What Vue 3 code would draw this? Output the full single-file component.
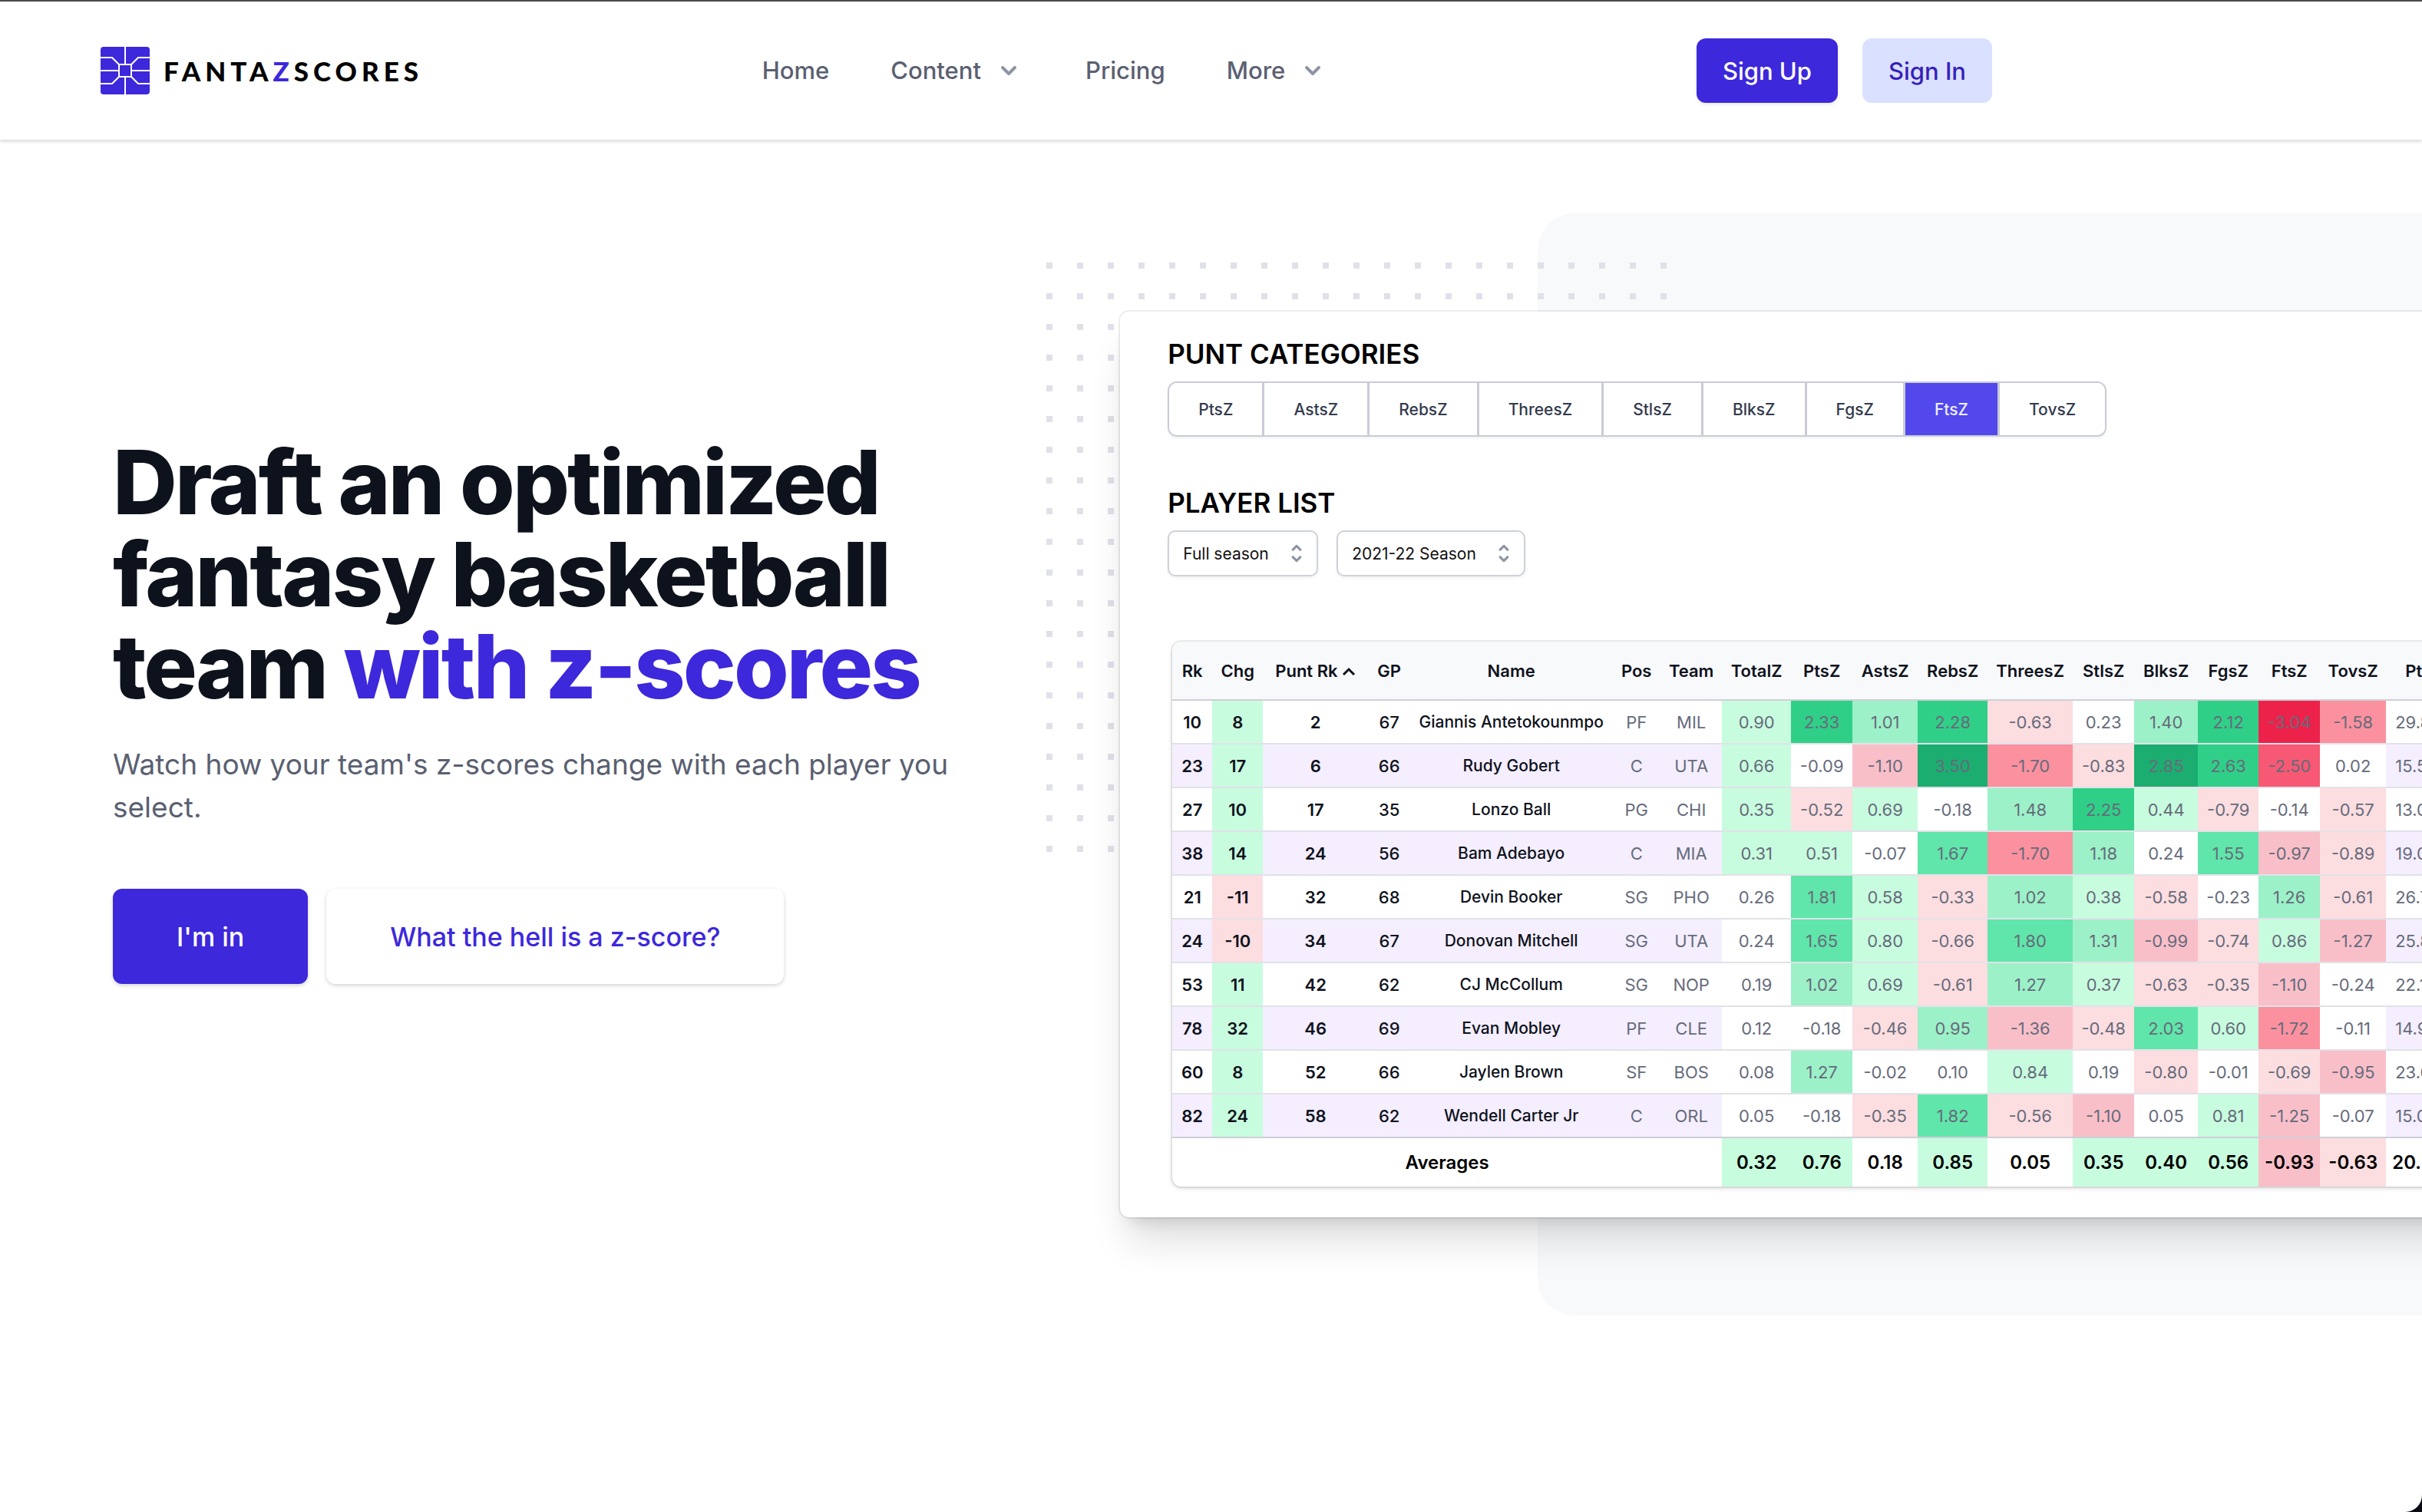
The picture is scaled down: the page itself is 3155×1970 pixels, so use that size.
<script setup>
import { ref } from 'vue'

const categories = ['PtsZ', 'AstsZ', 'RebsZ', 'ThreesZ', 'StlsZ', 'BlksZ', 'FgsZ', 'FtsZ', 'TovsZ']
const punted = ref('FtsZ')
const span = ref('Full season')
const season = ref('2021-22 Season')

const columns = [
  { key: 'Rk', width: 52 },
  { key: 'Chg', width: 66 },
  { key: 'Punt Rk', width: 137, sorted: true },
  { key: 'GP', width: 55 },
  { key: 'Name', width: 263 },
  { key: 'Pos', width: 63 },
  { key: 'Team', width: 80 },
  { key: 'TotalZ', width: 90 },
  { key: 'PtsZ', width: 80 },
  { key: 'AstsZ', width: 85 },
  { key: 'RebsZ', width: 91 },
  { key: 'ThreesZ', width: 111 },
  { key: 'StlsZ', width: 80 },
  { key: 'BlksZ', width: 83 },
  { key: 'FgsZ', width: 79 },
  { key: 'FtsZ', width: 80 },
  { key: 'TovsZ', width: 86 },
  { key: 'Pts', width: 84 },
]

const players = [
  { rk: 10, chg: 8, punt: 2, gp: 67, name: 'Giannis Antetokounmpo', pos: 'PF', team: 'MIL', z: ['0.90', '2.33', '1.01', '2.28', '-0.63', '0.23', '1.40', '2.12', '-3.04', '-1.58'], pts: '29.8' },
  { rk: 23, chg: 17, punt: 6, gp: 66, name: 'Rudy Gobert', pos: 'C', team: 'UTA', z: ['0.66', '-0.09', '-1.10', '3.50', '-1.70', '-0.83', '2.85', '2.63', '-2.50', '0.02'], pts: '15.5' },
  { rk: 27, chg: 10, punt: 17, gp: 35, name: 'Lonzo Ball', pos: 'PG', team: 'CHI', z: ['0.35', '-0.52', '0.69', '-0.18', '1.48', '2.25', '0.44', '-0.79', '-0.14', '-0.57'], pts: '13.0' },
  { rk: 38, chg: 14, punt: 24, gp: 56, name: 'Bam Adebayo', pos: 'C', team: 'MIA', z: ['0.31', '0.51', '-0.07', '1.67', '-1.70', '1.18', '0.24', '1.55', '-0.97', '-0.89'], pts: '19.0' },
  { rk: 21, chg: -11, punt: 32, gp: 68, name: 'Devin Booker', pos: 'SG', team: 'PHO', z: ['0.26', '1.81', '0.58', '-0.33', '1.02', '0.38', '-0.58', '-0.23', '1.26', '-0.61'], pts: '26.7' },
  { rk: 24, chg: -10, punt: 34, gp: 67, name: 'Donovan Mitchell', pos: 'SG', team: 'UTA', z: ['0.24', '1.65', '0.80', '-0.66', '1.80', '1.31', '-0.99', '-0.74', '0.86', '-1.27'], pts: '25.8' },
  { rk: 53, chg: 11, punt: 42, gp: 62, name: 'CJ McCollum', pos: 'SG', team: 'NOP', z: ['0.19', '1.02', '0.69', '-0.61', '1.27', '0.37', '-0.63', '-0.35', '-1.10', '-0.24'], pts: '22.1' },
  { rk: 78, chg: 32, punt: 46, gp: 69, name: 'Evan Mobley', pos: 'PF', team: 'CLE', z: ['0.12', '-0.18', '-0.46', '0.95', '-1.36', '-0.48', '2.03', '0.60', '-1.72', '-0.11'], pts: '14.9' },
  { rk: 60, chg: 8, punt: 52, gp: 66, name: 'Jaylen Brown', pos: 'SF', team: 'BOS', z: ['0.08', '1.27', '-0.02', '0.10', '0.84', '0.19', '-0.80', '-0.01', '-0.69', '-0.95'], pts: '23.6' },
  { rk: 82, chg: 24, punt: 58, gp: 62, name: 'Wendell Carter Jr', pos: 'C', team: 'ORL', z: ['0.05', '-0.18', '-0.35', '1.82', '-0.56', '-1.10', '0.05', '0.81', '-1.25', '-0.07'], pts: '15.0' },
]

const averages = ['0.32', '0.76', '0.18', '0.85', '0.05', '0.35', '0.40', '0.56', '-0.93', '-0.63']

const steps = [0.3, 0.92, 1.5, 2.1, 2.7]

// Shade of a z-score: up1..up5 for good values, down1..down5 for bad ones
function shade(value) {
  const n = Number(value)
  const level = steps.filter((s) => Math.abs(n) >= s).length
  return level === 0 ? 'even' : (n > 0 ? 'up' : 'down') + level
}
</script>

<template>
  <div class="page">
    <header class="topbar">
      <div class="topbar-inner">
        <div class="side">
          <a class="brand" href="#">
            <svg class="mark" viewBox="0 0 64 62" aria-hidden="true">
              <rect width="64" height="62" rx="4" fill="#3d28db" />
              <g fill="none" stroke="#fff" stroke-width="2">
                <path d="M32 0V23M32 39V62M0 31H24M40 31H64" />
                <path d="M0 14H15L24 23M64 14H49L40 23M0 48H15L24 39M64 48H49L40 39" />
                <rect x="24" y="23" width="16" height="16" />
              </g>
            </svg>
            <span class="wordmark">FANTA<span class="violet">Z</span>SCORES</span>
          </a>
        </div>
        <nav class="menu">
          <a href="#">Home</a>
          <button type="button">
            Content
            <svg viewBox="0 0 20 20" aria-hidden="true"><path d="M6 8l4 4 4-4" /></svg>
          </button>
          <a href="#">Pricing</a>
          <button type="button">
            More
            <svg viewBox="0 0 20 20" aria-hidden="true"><path d="M6 8l4 4 4-4" /></svg>
          </button>
        </nav>
        <div class="side account">
          <button type="button" class="btn solid">Sign Up</button>
          <button type="button" class="btn pale">Sign In</button>
        </div>
      </div>
    </header>

    <main class="hero">
      <section class="copy">
        <h1>Draft an optimized fantasy basketball team <span class="violet">with z-scores</span></h1>
        <p>Watch how your team's z-scores change with each player you select.</p>
        <div class="cta">
          <button type="button" class="big solid">I'm in</button>
          <button type="button" class="big plain">What the hell is a z-score?</button>
        </div>
      </section>

      <section class="stage">
        <div class="slab"></div>
        <svg class="dots" width="808" height="784" aria-hidden="true">
          <defs>
            <pattern id="dot-grid" width="40" height="40" patternUnits="userSpaceOnUse">
              <rect width="8" height="8" fill="#e0e1e8" />
            </pattern>
          </defs>
          <rect width="808" height="784" fill="url(#dot-grid)" />
        </svg>

        <div class="card">
          <h2>PUNT CATEGORIES</h2>
          <div class="group">
            <button
              v-for="c in categories"
              :key="c"
              type="button"
              :class="{ on: c === punted }"
              @click="punted = c"
            >{{ c }}</button>
          </div>

          <h2 class="second">PLAYER LIST</h2>
          <div class="filters">
            <div class="picker">
              <select v-model="span" aria-label="Span">
                <option>Full season</option>
              </select>
              <svg viewBox="0 0 20 20" aria-hidden="true"><path d="M7 7l3-3 3 3M7 13l3 3 3-3" /></svg>
            </div>
            <div class="picker">
              <select v-model="season" aria-label="Season">
                <option>2021-22 Season</option>
              </select>
              <svg viewBox="0 0 20 20" aria-hidden="true"><path d="M7 7l3-3 3 3M7 13l3 3 3-3" /></svg>
            </div>
          </div>

          <div class="sheet">
            <table>
              <colgroup>
                <col v-for="c in columns" :key="c.key" :style="{ width: c.width + 'px' }" />
              </colgroup>
              <thead>
                <tr>
                  <th v-for="c in columns" :key="c.key" scope="col">
                    {{ c.key }}
                    <svg v-if="c.sorted" viewBox="0 0 18 12" aria-hidden="true"><path d="M2 10l7-7 7 7" /></svg>
                  </th>
                </tr>
              </thead>
              <tbody>
                <tr v-for="p in players" :key="p.name">
                  <td class="strong">{{ p.rk }}</td>
                  <td class="strong" :class="p.chg > 0 ? 'up1' : 'down1'">{{ p.chg }}</td>
                  <td class="strong">{{ p.punt }}</td>
                  <td class="medium">{{ p.gp }}</td>
                  <td class="medium name">{{ p.name }}</td>
                  <td>{{ p.pos }}</td>
                  <td>{{ p.team }}</td>
                  <td v-for="(z, i) in p.z" :key="i" :class="shade(z)">{{ z }}</td>
                  <td class="points">{{ p.pts }}</td>
                </tr>
              </tbody>
              <tfoot>
                <tr>
                  <th colspan="7" scope="row">Averages</th>
                  <td v-for="(z, i) in averages" :key="i" :class="shade(z)">{{ z }}</td>
                  <td class="points">20.5</td>
                </tr>
              </tfoot>
            </table>
          </div>
        </div>
      </section>
    </main>
  </div>
</template>

<style>
html {
  background: #0a0a14;
}
body {
  margin: 0;
}
</style>

<style scoped>
.page {
  box-sizing: border-box;
  min-height: 100vh;
  overflow: hidden;
  border-top: 2px solid #4b4949;
  border-bottom-right-radius: 22px;
  background: #fff;
  color: #0e121c;
  font-family: Inter, 'Liberation Sans', sans-serif;
}
button,
select {
  font: inherit;
  cursor: pointer;
}
.violet {
  color: #3d28db;
}

.topbar {
  position: relative;
  background: #fff;
  box-shadow: 0 2px 6px rgba(0, 0, 0, 0.1), 0 2px 4px rgba(0, 0, 0, 0.08);
}
.topbar-inner {
  display: flex;
  align-items: center;
  box-sizing: border-box;
  max-width: 2595px;
  height: 180px;
  padding-left: 128px;
}
.side {
  display: flex;
  flex: 1;
}
.brand {
  display: flex;
  align-items: center;
  gap: 18px;
  padding-left: 3px;
  color: #000;
  text-decoration: none;
}
.mark {
  width: 64px;
  height: 62px;
}
.wordmark {
  font: 900 35px/40px Lato, sans-serif;
  letter-spacing: 6px;
}
.menu {
  display: flex;
  gap: 80px;
  font-size: 31px;
  font-weight: 500;
  line-height: 48px;
}
.menu a,
.menu button {
  display: flex;
  align-items: center;
  gap: 16px;
  padding: 0;
  border: 0;
  background: none;
  color: #5a6071;
  text-decoration: none;
}
.menu svg {
  width: 40px;
  height: 40px;
  fill: none;
  stroke: #8f94a5;
  stroke-width: 2;
  stroke-linecap: round;
  stroke-linejoin: round;
}
.account {
  justify-content: flex-end;
  gap: 32px;
}
.btn {
  height: 84px;
  padding: 0 34px;
  border: 0;
  border-radius: 12px;
  font-size: 31px;
  font-weight: 500;
}
.solid {
  background: #3d28db;
  color: #fff;
  box-shadow: 0 2px 4px rgba(0, 0, 0, 0.1);
}
.pale {
  background: #dae0ff;
  color: #361fb9;
}

.hero {
  display: grid;
  grid-template-columns: 37fr 43fr;
  padding-top: 96px;
}
.copy {
  padding: 290px 208px 0 147px;
}
h1 {
  margin: 0;
  font-size: 116px;
  font-weight: 800;
  line-height: 120px;
  letter-spacing: -0.025em;
}
.copy p {
  margin: 40px 0 78px;
  color: #5a6071;
  font-size: 37px;
  line-height: 56px;
}
.cta {
  display: flex;
  gap: 24px;
}
.big {
  height: 124px;
  padding: 0 83px;
  border: 0;
  border-radius: 12px;
  font-size: 34px;
  font-weight: 500;
  white-space: nowrap;
  box-shadow: 0 2px 6px rgba(0, 0, 0, 0.1), 0 2px 4px rgba(0, 0, 0, 0.08);
}
.plain {
  background: #fff;
  color: #3d28db;
}

.stage {
  position: relative;
  min-width: 0;
  padding: 128px 0;
}
.slab {
  position: absolute;
  top: 0;
  bottom: 0;
  left: 544px;
  right: 0;
  border-radius: 48px 0 0 48px;
  background: #f8f9fb;
}
.dots {
  position: absolute;
  top: 64px;
  left: -96px;
}
.card {
  position: relative;
  box-sizing: border-box;
  width: max-content;
  padding: 33px 62px 40px;
  border-radius: 12px;
  background: #fff;
  box-shadow: 0 0 0 2px rgba(0, 0, 0, 0.07), 0 40px 50px -10px rgba(0, 0, 0, 0.13),
    0 16px 20px -12px rgba(0, 0, 0, 0.13);
}
h2 {
  margin: 0 0 14px;
  color: #000;
  font-size: 35px;
  font-weight: 600;
  line-height: 44px;
}
.second {
  margin-top: 64px;
}
.group {
  display: flex;
  width: max-content;
  overflow: hidden;
  border: 2px solid #c9ccd7;
  border-radius: 12px;
  box-shadow: 0 2px 4px rgba(0, 0, 0, 0.06);
}
.group button {
  height: 68px;
  padding: 0 38px;
  border: 0;
  background: #fff;
  color: #333a4c;
  font-size: 21px;
  font-weight: 500;
}
.group button + button {
  border-left: 3px solid #c9ccd7;
}
.group .on {
  background: #5248ec;
  color: #eef0ff;
}
.filters {
  display: flex;
  gap: 24px;
}
.picker {
  position: relative;
}
.picker select {
  display: block;
  box-sizing: border-box;
  height: 60px;
  padding: 0 62px 0 18px;
  border: 2px solid #cfd1da;
  border-radius: 10px;
  appearance: none;
  background: #fff;
  color: #111;
  font-size: 21px;
  box-shadow: 0 2px 4px rgba(0, 0, 0, 0.06);
}
.picker svg {
  position: absolute;
  top: 14px;
  right: 12px;
  width: 32px;
  height: 32px;
  fill: none;
  stroke: #8f94a5;
  stroke-width: 2;
  stroke-linecap: round;
  stroke-linejoin: round;
  pointer-events: none;
}

.sheet {
  width: max-content;
  margin: 85px 0 0 6px;
  overflow: hidden;
  border-radius: 12px;
  box-shadow: 0 0 0 2px rgba(0, 0, 0, 0.06), 0 2px 6px rgba(0, 0, 0, 0.16);
}
table {
  width: 1665px;
  table-layout: fixed;
  border-collapse: separate;
  border-spacing: 0;
  font-size: 22px;
  text-align: center;
  white-space: nowrap;
}
th,
td {
  box-sizing: border-box;
  padding: 0;
}
thead th {
  height: 77px;
  border-bottom: 2px solid #cdcfd7;
  background: #f8f9fb;
  font-weight: 600;
}
thead svg {
  width: 18px;
  height: 12px;
  vertical-align: 1px;
  fill: none;
  stroke: #0e121c;
  stroke-width: 3;
}
tbody td {
  height: 57px;
  border-bottom: 2px solid #e1e2e8;
  color: #666b7b;
}
tbody tr:nth-child(even) td {
  background-color: #f4eefe;
}
tbody .strong {
  color: #0e121c;
  font-weight: 600;
}
tbody .medium {
  color: #0e121c;
  font-weight: 500;
}
tbody .name {
  font-size: 21px;
}
tbody tr:last-child td {
  border-bottom-color: #cdcfd7;
}
tfoot th,
tfoot td {
  height: 63px;
  color: #000;
  font-size: 24px;
  font-weight: 600;
}
.points {
  padding-left: 12px;
  text-align: left;
}
tfoot .points {
  padding-left: 8px;
}
tr .even,
tbody tr:nth-child(even) .even {
  background-color: #fff;
}
tr .up1,
tbody tr:nth-child(even) .up1 {
  background-color: #c8fcdf;
}
tr .up2,
tbody tr:nth-child(even) .up2 {
  background-color: #9cf1c8;
}
tr .up3,
tbody tr:nth-child(even) .up3 {
  background-color: #60e5aa;
}
tr .up4,
tbody tr:nth-child(even) .up4 {
  background-color: #30cf88;
}
tr .up5,
tbody tr:nth-child(even) .up5 {
  background-color: #1bae70;
}
tr .down1,
tbody tr:nth-child(even) .down1 {
  background-color: #fcdde0;
}
tr .down2,
tbody tr:nth-child(even) .down2 {
  background-color: #f9bfc9;
}
tr .down3,
tbody tr:nth-child(even) .down3 {
  background-color: #fb919f;
}
tr .down4,
tbody tr:nth-child(even) .down4 {
  background-color: #f75873;
}
tr .down5,
tbody tr:nth-child(even) .down5 {
  background-color: #ec224b;
}
</style>
